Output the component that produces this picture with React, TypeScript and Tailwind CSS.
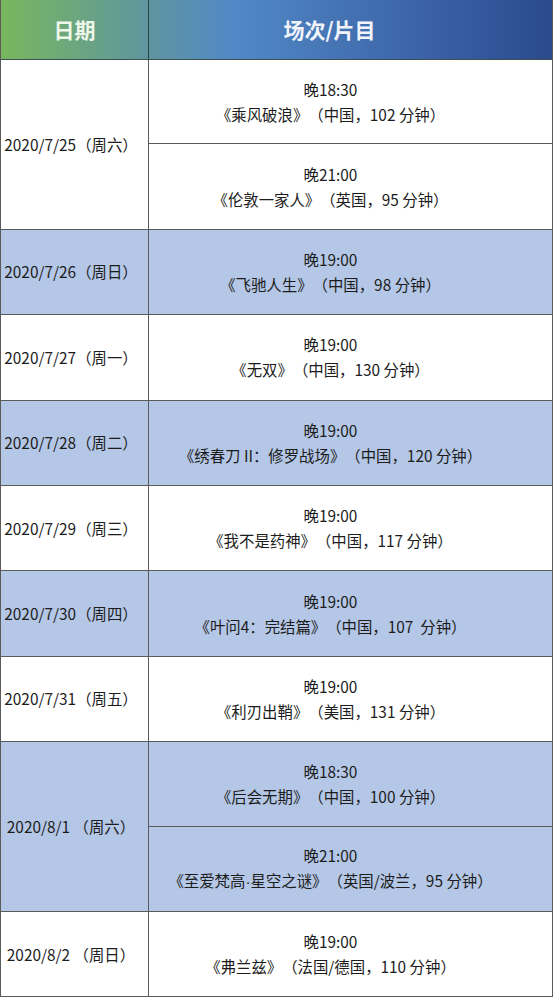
import React from 'react';

interface Show {
  time: string;
  film: string;
}

interface Day {
  date: string;
  shows: Show[];
  shaded?: boolean;
}

const schedule: Day[] = [
  {
    date: '2020/7/25（周六）',
    shows: [
      { time: '晚18:30', film: '《乘风破浪》（中国，102 分钟）' },
      { time: '晚21:00', film: '《伦敦一家人》（英国，95 分钟）' },
    ],
  },
  { date: '2020/7/26（周日）', shaded: true, shows: [{ time: '晚19:00', film: '《飞驰人生》（中国，98 分钟）' }] },
  { date: '2020/7/27（周一）', shows: [{ time: '晚19:00', film: '《无双》（中国，130 分钟）' }] },
  { date: '2020/7/28（周二）', shaded: true, shows: [{ time: '晚19:00', film: '《绣春刀 II：修罗战场》（中国，120 分钟）' }] },
  { date: '2020/7/29（周三）', shows: [{ time: '晚19:00', film: '《我不是药神》（中国，117 分钟）' }] },
  { date: '2020/7/30（周四）', shaded: true, shows: [{ time: '晚19:00', film: '《叶问4：完结篇》（中国，107  分钟）' }] },
  { date: '2020/7/31（周五）', shows: [{ time: '晚19:00', film: '《利刃出鞘》（美国，131 分钟）' }] },
  {
    date: '2020/8/1 （周六）',
    shaded: true,
    shows: [
      { time: '晚18:30', film: '《后会无期》（中国，100 分钟）' },
      { time: '晚21:00', film: '《至爱梵高·星空之谜》（英国/波兰，95 分钟）' },
    ],
  },
  { date: '2020/8/2 （周日）', shows: [{ time: '晚19:00', film: '《弗兰兹》（法国/德国，110 分钟）' }] },
];

const font = { fontFamily: '"Noto Sans CJK SC", "Noto Sans", sans-serif' };

// the middle dot should stay narrow, not the full-width CJK one
const renderFilm = (film: string) => {
  const parts = film.split('·');
  return parts.map((part, i) => (
    <React.Fragment key={i}>
      {i > 0 && <span className="font-['Liberation_Sans',sans-serif]">·</span>}
      {part}
    </React.Fragment>
  ));
};

export default function App() {
  return (
    <div className="w-[554px] h-[1000px] bg-white overflow-hidden [text-spacing-trim:space-all]" style={font}>
      <div className="w-[553px] border-l border-r border-b border-[#5a5a5a]">
        {/* header */}
        <div className="grid grid-cols-[148px_1fr] h-[60px] border-b border-[#3d4f4f] bg-[linear-gradient(90deg,#78b75e_0%,#5f95a0_27%,#5189c6_42%,#3e68ab_72%,#2b4a8e_100%)]">
          <div className="flex items-center justify-center border-r border-[#2f4545] text-[21px] font-bold text-[#eef8ea]">
            日期
          </div>
          <div className="flex items-center justify-center pr-[42px] text-[21px] font-bold text-[#f1f5fb]">
            场次/片目
          </div>
        </div>

        {schedule.map((day) => (
          <div
            key={day.date}
            className={`grid grid-cols-[148px_1fr] border-b border-[#5a5a5a] last:border-b-0 text-[15.4px] text-[#1c1c1c] ${
              day.shaded ? 'bg-[#b4c7e6]' : 'bg-white'
            }`}
          >
            <div className="flex items-center justify-center pr-[7px] whitespace-pre border-r border-[#5a5a5a]">
              {day.date}
            </div>
            <div className="flex flex-col">
              {day.shows.map((show, i) => (
                <div
                  key={show.time + i}
                  className={`h-[84.4px] flex flex-col items-center justify-center pr-[40px] leading-[25px] ${
                    i < day.shows.length - 1 ? 'border-b border-[#5a5a5a]' : ''
                  }`}
                >
                  <div>{show.time}</div>
                  <div className="whitespace-pre">{renderFilm(show.film)}</div>
                </div>
              ))}
            </div>
          </div>
        ))}
      </div>
    </div>
  );
}
